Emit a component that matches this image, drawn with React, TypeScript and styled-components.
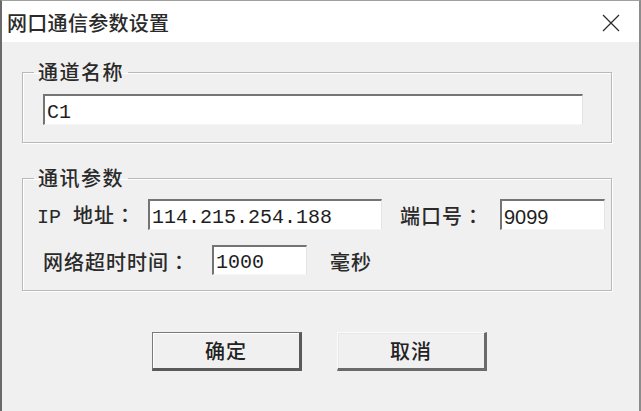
import React from "react";
import styled, { createGlobalStyle } from "styled-components";

const Global = createGlobalStyle`
  html, body { margin: 0; padding: 0; background: #f0f0f0; }
  body { font-family: "Noto Sans CJK SC", "Noto Sans", sans-serif; }
`;

const cjk = `"Noto Sans CJK SC", "Noto Sans", sans-serif`;

const Window = styled.div`
  width: 641px;
  height: 411px;
  box-sizing: border-box;
  background: #f0f0f0;
  border-top: 1px solid #a0a0a0;
  border-left: 2px solid #6a6a6a;
  border-right: 2px solid #8c8c8c;
  display: flex;
  flex-direction: column;
  overflow: hidden;
`;

const TitleBar = styled.div`
  height: 41px;
  flex: none;
  background: #ffffff;
  display: flex;
  align-items: center;
  justify-content: space-between;
  padding: 0 19px 0 5px;
`;

const Title = styled.div`
  font-family: ${cjk};
  font-size: 20px;
  font-weight: 500;
  line-height: 24px;
  color: #2a2a2a;
  margin-top: 2px;
  letter-spacing: 0.3px;
`;

const CloseIcon = styled.svg`
  width: 18px;
  height: 18px;
  display: block;
  margin-top: 2px;
`;

const Body = styled.div`
  flex: 1;
  display: flex;
  flex-direction: column;
  padding: 18px 0 0 20px;
`;

const Group = styled.fieldset<{ $top?: number; $pt: number; $pb: number }>`
  box-sizing: border-box;
  width: 590px;
  margin: ${(p) => p.$top ?? 0}px 0 0 0;
  padding: ${(p) => p.$pt}px 0 ${(p) => p.$pb}px 0;
  border: 1px solid #b9b9b9;
  box-shadow: inset 1px 1px 0 #ffffff, 1px 1px 0 #ffffff;
  min-inline-size: auto;
  display: flex;
  flex-direction: column;
  gap: 15px;
`;

const Legend = styled.legend`
  margin-left: 11px;
  padding: 0 4px;
  font-family: ${cjk};
  font-size: 20px;
  font-weight: 500;
  line-height: 24px;
  color: #2a2a2a;
  letter-spacing: 1.5px;
`;

const Row = styled.div<{ $pl: number }>`
  display: flex;
  align-items: center;
  padding-left: ${(p) => p.$pl}px;
`;

const Label = styled.span<{ $w?: number; $ml?: number }>`
  flex: none;
  width: ${(p) => (p.$w ? `${p.$w}px` : "auto")};
  margin-left: ${(p) => p.$ml ?? 0}px;
  font-family: ${cjk};
  font-size: 20px;
  font-weight: 500;
  line-height: 24px;
  color: #2a2a2a;
  letter-spacing: 1px;
  white-space: pre;
  padding-top: 3px;
`;

const Ascii = styled.span`
  font-family: "Liberation Mono", monospace;
  letter-spacing: 0;
`;

const Colon = styled.span`
  font-family: "Noto Sans CJK JP", sans-serif;
`;

const Edit = styled.input<{ $w: number; $h?: number; $mono?: boolean }>`
  box-sizing: border-box;
  flex: none;
  width: ${(p) => p.$w}px;
  height: ${(p) => p.$h ?? 31}px;
  margin: 0;
  padding: 4px 2px 0 2px;
  background: #ffffff;
  border-style: solid;
  border-width: 2px 1px 1px 2px;
  border-color: #747474 #e4e4e4 #f6f6f6 #747474;
  outline: none;
  font-family: ${(p) => (p.$mono ? `"Liberation Mono", monospace` : `"Liberation Sans", sans-serif`)};
  font-size: 20px;
  color: #1e1e1e;
`;

const ButtonRow = styled.div`
  display: flex;
  gap: 35px;
  margin: 41px 0 0 130px;
`;

const Button = styled.button<{ $default?: boolean }>`
  box-sizing: border-box;
  width: 150px;
  height: 39px;
  margin: 0;
  padding: 0;
  background: #f0f0f0;
  font-family: ${cjk};
  font-size: 20px;
  font-weight: 500;
  color: #222222;
  letter-spacing: 1px;
  border-style: solid;
  border-width: 1px 3px 3px 1px;
  border-color: ${(p) =>
    p.$default ? "#7a7a7a #5a5a5a #5a5a5a #7a7a7a" : "#fbfbfb #6a6a6a #6a6a6a #fbfbfb"};
  box-shadow: ${(p) => (p.$default ? "inset 1px 1px 0 #ffffff" : "inset 1px 1px 0 #e8e8e8")};
`;

export default function App() {
  return (
    <>
      <Global />
      <Window>
        <TitleBar>
          <Title>网口通信参数设置</Title>
          <CloseIcon viewBox="0 0 18 18">
            <path d="M1 1 L17 17 M17 1 L1 17" stroke="#2a2a2a" strokeWidth="1.2" fill="none" />
          </CloseIcon>
        </TitleBar>
        <Body>
          <Group $pt={10} $pb={17}>
            <Legend>通道名称</Legend>
            <Row $pl={20}>
              <Edit $w={540} $mono defaultValue="C1" readOnly />
            </Row>
          </Group>
          <Group $top={23} $pt={9} $pb={15}>
            <Legend>通讯参数</Legend>
            <Row $pl={14}>
              <Label $w={111}>
                <Ascii>IP </Ascii>地址<Colon>：</Colon>
              </Label>
              <Edit $w={234} $mono defaultValue="114.215.254.188" readOnly />
              <Label $w={100} $ml={18}>
                端口号<Colon>：</Colon>
              </Label>
              <Edit $w={105} defaultValue="9099" readOnly />
            </Row>
            <Row $pl={20}>
              <Label $w={169}>
                网络超时时间<Colon>：</Colon>
              </Label>
              <Edit $w={95} $h={30} $mono defaultValue="1000" readOnly />
              <Label $ml={23}>毫秒</Label>
            </Row>
          </Group>
          <ButtonRow>
            <Button $default>确定</Button>
            <Button>取消</Button>
          </ButtonRow>
        </Body>
      </Window>
    </>
  );
}
